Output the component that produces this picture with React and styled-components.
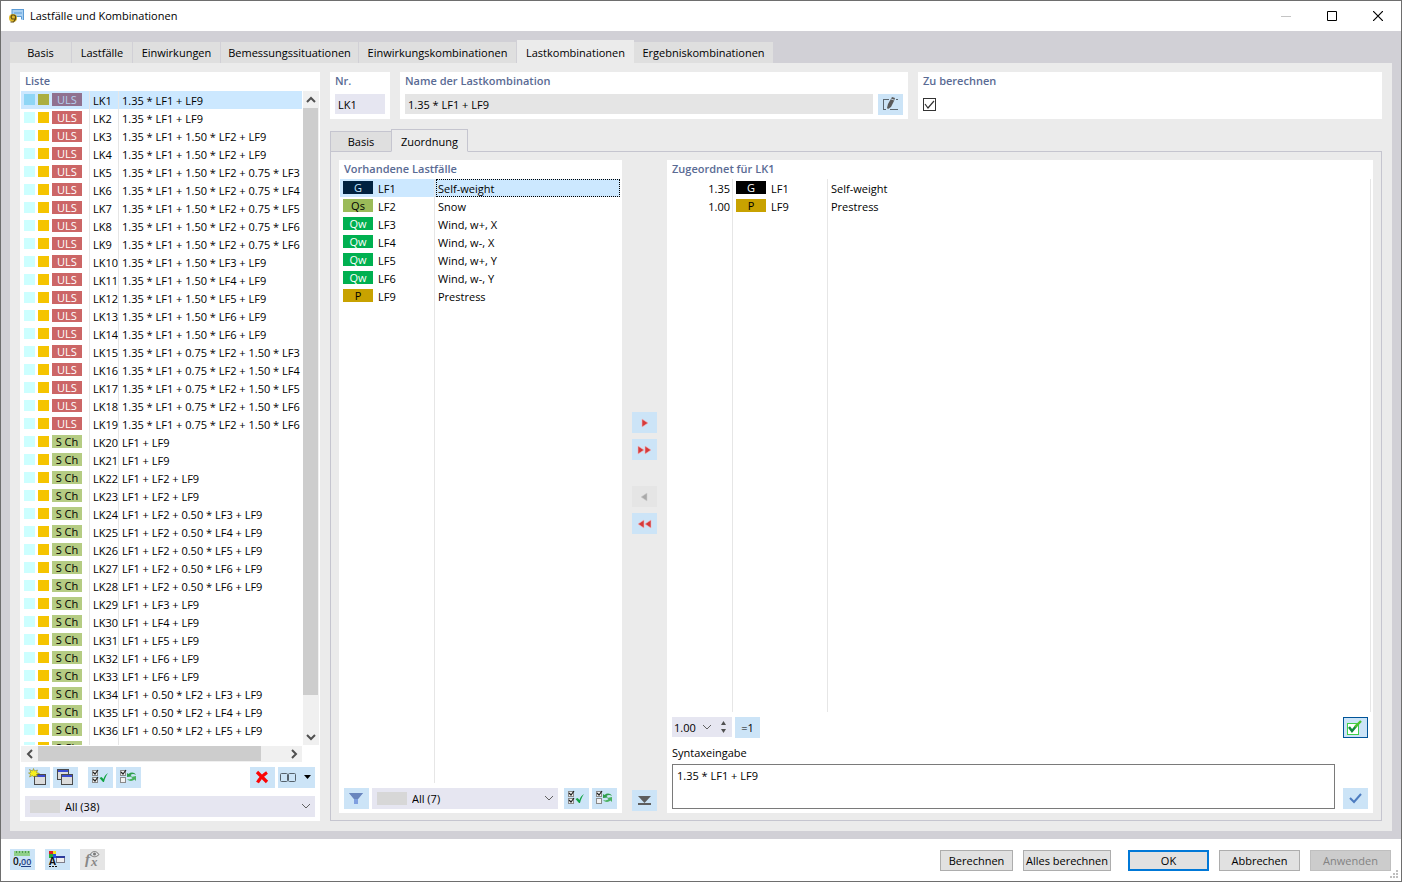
import * as React from 'react';
import styled, { createGlobalStyle, css } from 'styled-components';

const GlobalStyle = createGlobalStyle`
  * {
    box-sizing: border-box;
  }

  body {
    margin: 0;
    background: #fff;
  }

  body, button, input, select, textarea {
    font-family: 'Open Sans', 'Noto Sans', sans-serif;
    font-size: 11px;
    line-height: 16px;
    color: #000;
  }

  button, input, select, textarea {
    margin: 0;
    padding: 0;
    border: 0;
    border-radius: 0;
    background: none;
    outline: none;
  }
`;

const mainTabs = [
  { label: 'Basis', width: 62 },
  { label: 'Lastfälle', width: 61 },
  { label: 'Einwirkungen', width: 88 },
  { label: 'Bemessungssituationen', width: 138 },
  { label: 'Einwirkungskombinationen', width: 158 },
  { label: 'Lastkombinationen', width: 117, active: true },
  { label: 'Ergebniskombinationen', width: 140 },
];

const formulas = [
  '1.35 * LF1 + LF9',
  '1.35 * LF1 + LF9',
  '1.35 * LF1 + 1.50 * LF2 + LF9',
  '1.35 * LF1 + 1.50 * LF2 + LF9',
  '1.35 * LF1 + 1.50 * LF2 + 0.75 * LF3 + LF9',
  '1.35 * LF1 + 1.50 * LF2 + 0.75 * LF4 + LF9',
  '1.35 * LF1 + 1.50 * LF2 + 0.75 * LF5 + LF9',
  '1.35 * LF1 + 1.50 * LF2 + 0.75 * LF6 + LF9',
  '1.35 * LF1 + 1.50 * LF2 + 0.75 * LF6 + LF9',
  '1.35 * LF1 + 1.50 * LF3 + LF9',
  '1.35 * LF1 + 1.50 * LF4 + LF9',
  '1.35 * LF1 + 1.50 * LF5 + LF9',
  '1.35 * LF1 + 1.50 * LF6 + LF9',
  '1.35 * LF1 + 1.50 * LF6 + LF9',
  '1.35 * LF1 + 0.75 * LF2 + 1.50 * LF3 + LF9',
  '1.35 * LF1 + 0.75 * LF2 + 1.50 * LF4 + LF9',
  '1.35 * LF1 + 0.75 * LF2 + 1.50 * LF5 + LF9',
  '1.35 * LF1 + 0.75 * LF2 + 1.50 * LF6 + LF9',
  '1.35 * LF1 + 0.75 * LF2 + 1.50 * LF6 + LF9',
  'LF1 + LF9',
  'LF1 + LF9',
  'LF1 + LF2 + LF9',
  'LF1 + LF2 + LF9',
  'LF1 + LF2 + 0.50 * LF3 + LF9',
  'LF1 + LF2 + 0.50 * LF4 + LF9',
  'LF1 + LF2 + 0.50 * LF5 + LF9',
  'LF1 + LF2 + 0.50 * LF6 + LF9',
  'LF1 + LF2 + 0.50 * LF6 + LF9',
  'LF1 + LF3 + LF9',
  'LF1 + LF4 + LF9',
  'LF1 + LF5 + LF9',
  'LF1 + LF6 + LF9',
  'LF1 + LF6 + LF9',
  'LF1 + 0.50 * LF2 + LF3 + LF9',
  'LF1 + 0.50 * LF2 + LF4 + LF9',
  'LF1 + 0.50 * LF2 + LF5 + LF9',
  'LF1 + 0.50 * LF2 + LF6 + LF9',
];

const loadCases = [
  { kind: 'G', id: 'LF1', name: 'Self-weight' },
  { kind: 'Qs', id: 'LF2', name: 'Snow' },
  { kind: 'Qw', id: 'LF3', name: 'Wind, w+, X' },
  { kind: 'Qw', id: 'LF4', name: 'Wind, w-, X' },
  { kind: 'Qw', id: 'LF5', name: 'Wind, w+, Y' },
  { kind: 'Qw', id: 'LF6', name: 'Wind, w-, Y' },
  { kind: 'P', id: 'LF9', name: 'Prestress' },
];

const assigned = [
  { factor: '1.35', kind: 'G', id: 'LF1', name: 'Self-weight' },
  { factor: '1.00', kind: 'P', id: 'LF9', name: 'Prestress' },
];

const badgeColors = {
  G: ['#000000', '#ffffff'],
  GSelected: ['#002240', '#cce8ff'],
  Qs: ['#9bbb59', '#000000'],
  Qw: ['#00b050', '#ffffff'],
  P: ['#c8a200', '#000000'],
  ULS: ['#cc6666', '#ffffff'],
  ULSSelected: ['#90718f', '#b4d0ee'],
  'S Ch': ['#b5cc83', '#000000'],
};

/* Icons */

const Svg = ({ w = 25, h = 21, children }) => (
  <svg width={w} height={h} viewBox={`0 0 ${w} ${h}`} fill="none" aria-hidden="true">
    {children}
  </svg>
);

const AppIcon = () => (
  <Svg w={16} h={16}>
    <path d="M3 1h12v7h-1v4h-2V9H5L3 8z" fill="#a9d0f2" />
    <path d="M3 1.500h12M3 1v6M14.500 1v11M6 8.500h6.500V11" stroke="#5b9bd5" />
    <path d="M5 5h8" stroke="#5b9bd5" />
    <circle cx="4" cy="10" r="4" fill="#e0b92c" />
    <path d="M1.500 14h3l2-3V8L5 7H3L2 9l1 2h3" stroke="#5c4b16" strokeWidth="1.200" />
  </Svg>
);

const MiniWindow = ({ x, y }) => (
  <g shapeRendering="crispEdges">
    <rect x={x + 0.5} y={y + 0.5} width="11" height="10" fill="#dcdcdc" stroke="#4a4a4a" />
    <path d={`M${x + 1} ${y + 2}h10`} stroke="#3b4bd0" strokeWidth="2" />
  </g>
);

const NewIcon = () => (
  <Svg>
    <MiniWindow x={9} y={7} />
    <path d="M8.500 1.500l1 2.500 3-1-1 2.500 3 1-3 1 1 2-3-.5-1 1-1-1.500-3 1.500 1-2.500-2-1.500 2.500-.5-1.500-3 3 1.500z" fill="#f7f01f" stroke="#77731a" strokeWidth=".5" />
  </Svg>
);

const CopyIcon = () => (
  <Svg>
    <MiniWindow x={4} y={2} />
    <MiniWindow x={8} y={7} />
  </Svg>
);

const TickBox = ({ y, on }) => (
  <g>
    <rect x="4.500" y={y + 0.5} width="5" height="5" fill="#f2f2f2" stroke="#8a8a8a" shapeRendering="crispEdges" />
    {on && <path d={`M5 ${y + 2}l2 2 3-4`} stroke="#222" strokeWidth="1.2" />}
  </g>
);

const CheckAllIcon = () => (
  <Svg>
    <TickBox y={3} on />
    <TickBox y={10} on />
    <path d="M11.500 11l2-1 2 2c1-3 2-4.500 4.500-6-2 3-3 5-4 9h-1z" fill="#12a544" />
  </Svg>
);

const InvertIcon = () => (
  <Svg>
    <TickBox y={3} on />
    <TickBox y={10} />
    <path d="M11 10V6l1.500 1C15 5 18 5 20 8c-2-1.500-4-1.500-5.500 0L16 9.500z" fill="#2f9e4c" />
    <path d="M20 9v5l-1.500-1.500c-2 2-5.500 2-7.500-.5 2 .8 4 .5 5.500-1L15 10z" fill="#49b25f" />
  </Svg>
);

const DeleteIcon = () => (
  <Svg>
    <path d="M7 5l10 10M17 5.500C13 8 10 11 7.500 15.500" stroke="#fb0505" strokeWidth="3.200" />
  </Svg>
);

const ColumnsIcon = () => (
  <Svg w={37}>
    <rect x="2.500" y="6.500" width="7" height="8" rx="1" stroke="#55616b" />
    <rect x="10.500" y="6.500" width="7" height="8" rx="1" stroke="#55616b" />
    <path d="M26 8h7l-3.500 4z" fill="#000" />
  </Svg>
);

const FilterIcon = () => (
  <Svg>
    <path d="M5 5h14l-5 6v5h-4v-5z" fill="#7f9fe0" />
    <path d="M5 5h14l-5 6h-4z" fill="#6a86bd" />
  </Svg>
);

const ArrowIcon = ({ left, double, muted }) => {
  const fill = muted ? '#a9a9a9' : '#d63a3a';
  const edge = muted ? '#cfcfcf' : '#f0b5be';
  const starts = double ? [6, 13] : [10];
  return (
    <Svg>
      <g transform={left ? 'translate(25 0) scale(-1 1)' : undefined}>
        {starts.map((x) => (
          <path key={x} d={`M${x} 7v8l6-4z`} fill={fill} stroke={edge} strokeWidth=".6" />
        ))}
      </g>
    </Svg>
  );
};

const CollapseIcon = () => (
  <Svg>
    <path d="M6 6h13l-6.500 7z" fill="#5e5e5e" />
    <path d="M6 14h13" stroke="#5e5e5e" strokeWidth="2" />
  </Svg>
);

const EditIcon = () => (
  <Svg>
    <path d="M11 5.500H5.500v10H8M12 15.500h8M18 5.500h2" stroke="#5b6770" shapeRendering="crispEdges" />
    <path d="M14 3l3 1-1 3-3 6-3 2-1-1 1-4z" fill="#5a5a5a" />
    <path d="M13 5l3 1" stroke="#b9c9d6" />
  </Svg>
);

const AcceptIcon = () => (
  <Svg>
    <rect x="4.500" y="6.500" width="11" height="11" fill="#fff" stroke="#3fd04a" />
    <path d="M6 10l3 4 5-6" stroke="#118a3e" strokeWidth="2.400" />
    <path d="M12 10l6-6" stroke="#4cc22f" strokeWidth="2.400" />
  </Svg>
);

const ApplyIcon = () => (
  <Svg>
    <path d="M7 10l4 4 7-8" stroke="#4d7cc0" strokeWidth="2" />
  </Svg>
);

const UnitsIcon = () => (
  <Svg>
    <path d="M4 2h16v5H4z" fill="#8fd08a" />
    <path d="M6.500 2v2M9.500 2v2M12.500 2v2M15.500 2v2M18.500 2v2" stroke="#4f9c50" />
    <text x="3" y="16" fontSize="10" fontWeight="600" fill="#111">0,</text>
    <text x="11" y="16" fontSize="9" fontWeight="600" fill="#1f3f86">00</text>
    <path d="M11 17.500h10" stroke="#1f3f86" />
  </Svg>
);

const DisplayIcon = () => (
  <Svg>
    <g shapeRendering="crispEdges">
      <path d="M4 2h4v3H4z" fill="#e02020" />
      <path d="M8 2h3v3H8z" fill="#f3e51b" />
      <path d="M4 5h4v4H4z" fill="#1fae3a" />
      <path d="M8 5h3v4H8z" fill="#2450e0" />
      <rect x="11.500" y="7.500" width="8" height="6" fill="#eee" stroke="#7d7d8a" />
      <path d="M11 8h9" stroke="#2c3c9c" strokeWidth="2" />
      <path d="M4 17.500h2M7 17.500h2M10 17.500h2" stroke="#111" />
    </g>
    <text x="4" y="16" fontSize="10" fontWeight="700" fill="#111">A</text>
  </Svg>
);

const FormulaIcon = () => (
  <Svg>
    <text x="5" y="15" fontSize="15" fontStyle="italic" fontWeight="700" fontFamily="Liberation Serif, serif" fill="#888">f</text>
    <text x="11" y="17" fontSize="13" fontStyle="italic" fontWeight="700" fontFamily="Liberation Serif, serif" fill="#888">x</text>
    <path d="M10 5.500c3-4 6-4 9 0-3 3-6 3-9 0z" stroke="#777" />
    <circle cx="14.500" cy="5" r="1.500" fill="#777" />
  </Svg>
);

const Chevron = ({ dir = 'down', bold }) => (
  <svg width="10" height="10" viewBox="0 0 10 10" fill="none" aria-hidden="true">
    <path
      d={{ down: 'M1 3l4 4 4-4', up: 'M1 7l4-4 4 4', left: 'M7 1L3 5l4 4', right: 'M3 1l4 4-4 4' }[dir]}
      stroke={bold ? '#505050' : '#606060'}
      strokeWidth={bold ? 2 : 1}
    />
  </svg>
);

/* Window frame */

const Window = styled.div`
  display: flex;
  flex-direction: column;
  height: 100vh;
  min-height: 560px;
  border: 1px solid #6e6e6e;
  background: #fff;
`;

const TitleBar = styled.header`
  display: flex;
  align-items: center;
  height: 30px;
  padding-left: 8px;
  gap: 5px;
`;

const WindowTitle = styled.h1`
  flex: 1;
  margin: 0;
  font-size: 11px;
  font-weight: 400;
`;

const WindowButtons = styled.div`
  display: flex;

  button {
    display: flex;
    align-items: center;
    justify-content: center;
    width: 46px;
    height: 28px;
  }
`;

const Body = styled.main`
  flex: 1;
  display: flex;
  flex-direction: column;
  min-height: 0;
  padding: 9px 9px 8px;
  background: #d1d0d6;
`;

const Tabs = styled.div`
  display: flex;
  align-items: flex-end;
`;

const Tab = styled.button`
  width: ${(props) => props.$width}px;
  height: ${(props) => (props.$active ? 23 : 21)}px;
  padding-top: ${(props) => (props.$active ? 2 : 0)}px;
  border-right: ${(props) => (props.$active ? 0 : '1px solid #d1d0d6')};
  background: ${(props) => (props.$active ? '#ebebeb' : '#dfdfdf')};
  white-space: nowrap;
`;

const Page = styled.div`
  flex: 1;
  display: flex;
  gap: 10px;
  min-height: 0;
  padding: 9px 10px 10px;
  background: #ebebeb;
`;

const Card = styled.section`
  display: flex;
  flex-direction: column;
  min-width: 0;
  min-height: 0;
  background: #fff;
`;

const ListCard = styled(Card)`
  flex: 0 0 300px;
  padding-bottom: 4px;
`;

const Heading = styled.h2`
  flex: none;
  height: 19px;
  margin: 0;
  padding: 0 5px;
  font-size: 11px;
  font-weight: 600;
  line-height: 18px;
  color: #5a6b94;
`;

/* Tables */

const ListArea = styled.div`
  flex: 1;
  display: grid;
  grid-template-columns: minmax(0, 1fr) 16px;
  grid-template-rows: minmax(0, 1fr) 16px;
  gap: 1px;
  min-height: 0;
  margin: 0 1px;
`;

const TableArea = styled.div`
  flex: 1;
  min-height: 0;
  overflow: hidden;
  margin: ${(props) => props.$margin || 0};
`;

const Table = styled.table`
  width: 100%;
  height: ${(props) => (props.$fill ? '100%' : 'auto')};
  border-collapse: collapse;
  border-spacing: 0;
  table-layout: fixed;
`;

const Row = styled.tr`
  height: 18px;
  background: ${(props) => (props.$selected ? '#cce8ff' : 'transparent')};
`;

const Cell = styled.td`
  width: ${(props) => (props.$width ? `${props.$width}px` : 'auto')};
  padding: 2px 0 0 3px;
  overflow: hidden;
  white-space: nowrap;
  text-align: left;
  line-height: 16px;
  ${(props) => !props.$first && css`
    box-shadow: inset 1px 0 #e6e6e6;
    padding-left: 4px;
  `}
  ${(props) => props.$last && css`
    box-shadow: inset 1px 0 #e6e6e6, inset -1px 0 #e6e6e6;
  `}
`;

const FactorCell = styled(Cell)`
  padding-right: 2px;
  text-align: right;
`;

/* fills the cell up to its top edge */
const Markers = styled.div`
  display: flex;
  align-items: flex-start;
  height: 18px;
  margin-top: -2px;
  gap: 3px;
`;

const Swatch = styled.span`
  width: 11px;
  height: 11px;
  margin-top: 3px;
  background: ${(props) => props.$color};
`;

const Badge = styled.span`
  flex: none;
  width: 30px;
  height: 13px;
  margin: 2px 2px 0 0;
  text-align: center;
  line-height: 13px;
  background: ${(props) => badgeColors[props.$kind][0]};
  color: ${(props) => badgeColors[props.$kind][1]};
`;

const MarkerText = styled.span`
  margin-top: 2px;
`;

const FocusBox = styled.div`
  height: 18px;
  margin: -2px 0 0 -2px;
  padding: 1px 0 0 1px;
  border: 1px dotted #000;
`;

/* Scroll bars */

const ScrollBar = styled.div`
  display: flex;
  flex-direction: ${(props) => (props.$vertical ? 'column' : 'row')};
  background: #f0f0f0;

  button {
    display: flex;
    flex: 0 0 17px;
    align-items: center;
    justify-content: center;
  }
`;

const Thumb = styled.div`
  flex: ${(props) => props.$size};
  margin: ${(props) => (props.$vertical ? '0 1px 0 0' : '0 0 1px 0')};
  background: #cdcdcd;
`;

const Rest = styled.div`
  flex: ${(props) => props.$size};
`;

/* Controls */

const Toolbar = styled.div`
  display: flex;
  flex: none;
  gap: 3px;
  padding: ${(props) => props.$padding || 0};
`;

const Spacer = styled.div`
  flex: 1;
`;

const Gap = styled.div`
  flex: 0 0 ${(props) => props.$size || 0}px;
`;

const IconButton = styled.button`
  display: flex;
  flex: none;
  align-items: center;
  justify-content: center;
  width: ${(props) => (props.$wide ? 37 : 25)}px;
  height: 21px;
  background: #cce4f7;
  ${(props) => props.$outlined && css`
    border: 1px solid #005499;
  `}

  &:disabled {
    background: #e5e5e5;
  }

  svg {
    flex: none;
  }
`;

const ComboBox = styled.div`
  position: relative;
  flex: ${(props) => (props.$grow ? 1 : 'none')};
  height: 21px;
  margin: ${(props) => props.$margin || 0};
  background: #e6e6f1;

  select {
    width: 100%;
    height: 21px;
    padding-left: 40px;
    appearance: none;
  }

  svg {
    position: absolute;
    right: 4px;
    top: 5px;
    pointer-events: none;
  }
`;

const ComboSwatch = styled.span`
  position: absolute;
  left: 5px;
  top: 4px;
  width: 30px;
  height: 13px;
  background: #d7d7d7;
  pointer-events: none;
`;

const TextInput = styled.input`
  flex: 1;
  min-width: 0;
  height: 20px;
  padding-left: 3px;
  padding-top: 1px;
  background: ${(props) => (props.readOnly ? '#e5e5e5' : '#e6e6f1')};
`;

const CheckBox = styled.input`
  appearance: none;
  width: 13px;
  height: 13px;
  border: 1px solid #333;
`;

const CheckWrap = styled.div`
  position: relative;
  width: 13px;
  height: 13px;
  margin: 7px 5px;
  display: flex;

  svg {
    position: absolute;
    inset: 0;
    pointer-events: none;
  }
`;

const Detail = styled.div`
  flex: 1;
  display: flex;
  flex-direction: column;
  min-width: 0;
`;

const HeaderCards = styled.div`
  display: grid;
  flex: none;
  grid-template-columns: 60px 508fr 464fr;
  gap: 10px;
  height: 47px;
  margin-bottom: 10px;
`;

const FieldRow = styled.div`
  display: flex;
  gap: 5px;
  padding: 3px 5px 0;
`;

const SubTabs = styled.div`
  display: flex;
  flex: none;
  align-items: flex-end;
  height: 23px;
  margin-bottom: -1px;
  z-index: 1;
`;

const SubTab = styled.button`
  width: ${(props) => props.$width}px;
  height: ${(props) => (props.$active ? 23 : 21)}px;
  border: 1px solid #c5c5cf;
  border-right-width: ${(props) => (props.$active ? 1 : 0)}px;
  border-bottom-color: ${(props) => (props.$active ? '#ebebeb' : '#c5c5cf')};
  padding-top: ${(props) => (props.$active ? 2 : 0)}px;
  background: ${(props) => (props.$active ? '#ebebeb' : '#dfdfdf')};
`;

const SubPage = styled.div`
  flex: 1;
  display: grid;
  grid-template-columns: 283px 45px minmax(0, 1fr);
  grid-template-rows: minmax(0, 1fr);
  min-height: 0;
  padding: 8px 8px 7px;
  border: 1px solid #c5c5cf;
`;

const MoveColumn = styled.div`
  display: flex;
  flex-direction: column;
  align-items: center;
  gap: 6px;
  padding: 2px 0;
`;

const Spinner = styled.div`
  display: flex;
  align-items: center;
  width: 60px;
  height: 20px;
  background: #e6e6f1;

  input {
    width: 30px;
    padding: 1px 0 0 2px;
  }

  button {
    display: flex;
  }
`;

const SpinButtons = styled.div`
  display: flex;
  flex-direction: column;
  gap: 4px;
  margin-left: 9px;
`;

const SyntaxLabel = styled.label`
  flex: none;
  height: 26px;
  padding: 7px 5px 0;
`;

const SyntaxInput = styled.textarea`
  flex: 1;
  height: 45px;
  padding: 3px 4px;
  border: 1px solid #7a7a7a;
  background: #fff;
  resize: none;
`;

const SyntaxRow = styled.div`
  display: flex;
  flex: none;
  align-items: flex-end;
  gap: 8px;
  padding: 0 5px 4px;
`;

const Footer = styled.footer`
  position: relative;
  display: flex;
  flex: none;
  align-items: flex-start;
  gap: 10px;
  height: 42px;
  padding: 10px 10px 0 9px;
`;

const PushGroup = styled.div`
  display: flex;
  gap: 10px;
  margin: 1px 0 0 7px;
`;

const PushButton = styled.button`
  width: ${(props) => props.$width || 81}px;
  height: 21px;
  padding-top: 1px;
  border: ${(props) => (props.$primary ? '2px solid #0078d7' : '1px solid #adadad')};
  background: #e1e1e1;
  white-space: nowrap;

  &:disabled {
    border-color: #bfbfbf;
    background: #cccccc;
    color: #838383;
  }
`;

const Grip = styled.div`
  position: absolute;
  right: 2px;
  bottom: 2px;
  display: flex;
`;

const CombinationRow = ({ index, formula }) => {
  const selected = index === 0;
  const kind = index < 19 ? 'ULS' : 'S Ch';
  return (
    <Row $selected={selected}>
      <Cell $first $width={68}>
        <Markers>
          <Swatch $color={selected ? '#8fd6f5' : '#ccffff'} />
          <Swatch $color={selected ? '#abae40' : '#f5c400'} />
          <Badge $kind={selected ? 'ULSSelected' : kind}>{kind}</Badge>
        </Markers>
      </Cell>
      <Cell $width={29}>{`LK${index + 1}`}</Cell>
      <Cell>{formula}</Cell>
    </Row>
  );
};

const Combo = ({ text, label, ...rest }) => (
  <ComboBox {...rest}>
    <ComboSwatch />
    <select aria-label={label} defaultValue={text}>
      <option>{text}</option>
    </select>
    <Chevron />
  </ComboBox>
);

const CombinationList = () => (
  <ListCard>
    <Heading>Liste</Heading>
    <ListArea>
      <TableArea>
        <Table>
          <tbody>
            {formulas.map((formula, index) => (
              <CombinationRow key={index} index={index} formula={formula} />
            ))}
          </tbody>
        </Table>
      </TableArea>
      <ScrollBar $vertical>
        <button type="button" aria-label="Nach oben"><Chevron dir="up" bold /></button>
        <Thumb $vertical $size={587} />
        <Rest $size={33} />
        <button type="button" aria-label="Nach unten"><Chevron bold /></button>
      </ScrollBar>
      <ScrollBar>
        <button type="button" aria-label="Nach links"><Chevron dir="left" bold /></button>
        <Thumb $size={223} />
        <Rest $size={24} />
        <button type="button" aria-label="Nach rechts"><Chevron dir="right" bold /></button>
      </ScrollBar>
    </ListArea>
    <Toolbar $padding="5px 5px 8px">
      <IconButton aria-label="Neu"><NewIcon /></IconButton>
      <IconButton aria-label="Kopieren"><CopyIcon /></IconButton>
      <Gap $size={4} />
      <IconButton aria-label="Alle auswählen"><CheckAllIcon /></IconButton>
      <IconButton aria-label="Auswahl umkehren"><InvertIcon /></IconButton>
      <Spacer />
      <IconButton aria-label="Löschen"><DeleteIcon /></IconButton>
      <IconButton $wide aria-label="Spalten"><ColumnsIcon /></IconButton>
    </Toolbar>
    <Combo text="All (38)" label="Listenfilter" $margin="0 5px" />
  </ListCard>
);

const AvailableCases = () => (
  <Card>
    <Heading>Vorhandene Lastfälle</Heading>
    <TableArea $margin="0 2px 5px 1px">
      <Table $fill>
        <tbody>
          {loadCases.map((item, index) => (
            <Row key={item.id} $selected={index === 0}>
              <Cell $first $width={94}>
                <Markers>
                  <Badge $kind={index === 0 ? 'GSelected' : item.kind}>{item.kind}</Badge>
                  <MarkerText>{item.id}</MarkerText>
                </Markers>
              </Cell>
              <Cell>{index === 0 ? <FocusBox>{item.name}</FocusBox> : item.name}</Cell>
            </Row>
          ))}
          <tr>
            <Cell $first />
            <Cell />
          </tr>
        </tbody>
      </Table>
    </TableArea>
    <Toolbar $padding="0 5px 4px">
      <IconButton aria-label="Filter"><FilterIcon /></IconButton>
      <Combo text="All (7)" label="Lastfallfilter" $grow />
      <Gap />
      <IconButton aria-label="Alle auswählen"><CheckAllIcon /></IconButton>
      <IconButton aria-label="Auswahl umkehren"><InvertIcon /></IconButton>
    </Toolbar>
  </Card>
);

const AssignedCases = () => (
  <Card>
    <Heading>Zugeordnet für LK1</Heading>
    <TableArea $margin="0 2px 5px 1px">
      <Table $fill>
        <tbody>
          {assigned.map((item) => (
            <Row key={item.id}>
              <FactorCell $first $width={64}>{item.factor}</FactorCell>
              <Cell $width={95}>
                <Markers>
                  <Badge $kind={item.kind}>{item.kind}</Badge>
                  <MarkerText>{item.id}</MarkerText>
                </Markers>
              </Cell>
              <Cell $last>{item.name}</Cell>
            </Row>
          ))}
          <tr>
            <Cell $first />
            <Cell />
            <Cell $last />
          </tr>
        </tbody>
      </Table>
    </TableArea>
    <Toolbar $padding="0 5px">
      <Spinner>
        <input aria-label="Faktor" defaultValue="1.00" />
        <button type="button" aria-label="Faktor wählen"><Chevron /></button>
        <SpinButtons>
          <button type="button" aria-label="Erhöhen">
            <svg width="5" height="4" aria-hidden="true"><path d="M0 4h5L2.500 0z" fill="#505050" /></svg>
          </button>
          <button type="button" aria-label="Verringern">
            <svg width="5" height="4" aria-hidden="true"><path d="M0 0h5L2.500 4z" fill="#505050" /></svg>
          </button>
        </SpinButtons>
      </Spinner>
      <IconButton>=1</IconButton>
      <Spacer />
      <IconButton $outlined aria-label="Automatisch übernehmen"><AcceptIcon /></IconButton>
    </Toolbar>
    <SyntaxLabel htmlFor="syntax">Syntaxeingabe</SyntaxLabel>
    <SyntaxRow>
      <SyntaxInput id="syntax" defaultValue="1.35 * LF1 + LF9" />
      <IconButton aria-label="Übernehmen"><ApplyIcon /></IconButton>
    </SyntaxRow>
  </Card>
);

const HeaderFields = () => (
  <HeaderCards>
    <Card>
      <Heading as="label" htmlFor="nr">Nr.</Heading>
      <FieldRow>
        <TextInput id="nr" defaultValue="LK1" />
      </FieldRow>
    </Card>
    <Card>
      <Heading as="label" htmlFor="name">Name der Lastkombination</Heading>
      <FieldRow>
        <TextInput id="name" defaultValue="1.35 * LF1 + LF9" readOnly />
        <IconButton aria-label="Name bearbeiten"><EditIcon /></IconButton>
      </FieldRow>
    </Card>
    <Card>
      <Heading as="label" htmlFor="calc">Zu berechnen</Heading>
      <CheckWrap>
        <CheckBox type="checkbox" id="calc" defaultChecked />
        <Svg w={13} h={13}>
          <path d="M2 6l3 4 6-7" stroke="#333" strokeWidth="1.200" />
        </Svg>
      </CheckWrap>
    </Card>
  </HeaderCards>
);

const App = () => (
  <Window>
    <GlobalStyle />
    <TitleBar>
      <AppIcon />
      <WindowTitle>Lastfälle und Kombinationen</WindowTitle>
      <WindowButtons>
        <button type="button" aria-label="Minimieren">
          <Svg w={10} h={10}><path d="M0 5.500h10" stroke="#c4c4c4" /></Svg>
        </button>
        <button type="button" aria-label="Maximieren">
          <Svg w={10} h={10}><path d="M.5.5h9v9h-9z" stroke="#000" /></Svg>
        </button>
        <button type="button" aria-label="Schließen">
          <Svg w={10} h={10}><path d="M0 0l10 10M10 0L0 10" stroke="#000" strokeWidth="1.200" /></Svg>
        </button>
      </WindowButtons>
    </TitleBar>
    <Body>
      <Tabs>
        {mainTabs.map((tab) => (
          <Tab key={tab.label} $width={tab.width} $active={tab.active}>{tab.label}</Tab>
        ))}
      </Tabs>
      <Page>
        <CombinationList />
        <Detail>
          <HeaderFields />
          <SubTabs>
            <SubTab $width={61}>Basis</SubTab>
            <SubTab $width={77} $active>Zuordnung</SubTab>
          </SubTabs>
          <SubPage>
            <AvailableCases />
            <MoveColumn>
              <Spacer />
              <IconButton aria-label="Hinzufügen"><ArrowIcon /></IconButton>
              <IconButton aria-label="Alle hinzufügen"><ArrowIcon double /></IconButton>
              <Gap $size={14} />
              <IconButton disabled aria-label="Entfernen"><ArrowIcon left muted /></IconButton>
              <IconButton aria-label="Alle entfernen"><ArrowIcon left double /></IconButton>
              <Spacer />
              <IconButton aria-label="Einklappen"><CollapseIcon /></IconButton>
            </MoveColumn>
            <AssignedCases />
          </SubPage>
        </Detail>
      </Page>
    </Body>
    <Footer>
      <IconButton aria-label="Einheiten"><UnitsIcon /></IconButton>
      <IconButton aria-label="Anzeige"><DisplayIcon /></IconButton>
      <IconButton disabled aria-label="Formel"><FormulaIcon /></IconButton>
      <Spacer />
      <PushGroup>
        <PushButton $width={73}>Berechnen</PushButton>
        <PushButton $width={88}>Alles berechnen</PushButton>
      </PushGroup>
      <PushGroup>
        <PushButton $primary>OK</PushButton>
        <PushButton>Abbrechen</PushButton>
        <PushButton disabled>Anwenden</PushButton>
      </PushGroup>
      <Grip>
        <Svg w={9} h={9}>
          <path d="M6 0h2v2H6zM3 3h2v2H3zM6 3h2v2H6zM0 6h2v2H0zM3 6h2v2H3zM6 6h2v2H6z" fill="#bfbfbf" />
        </Svg>
      </Grip>
    </Footer>
  </Window>
);

export default App;
